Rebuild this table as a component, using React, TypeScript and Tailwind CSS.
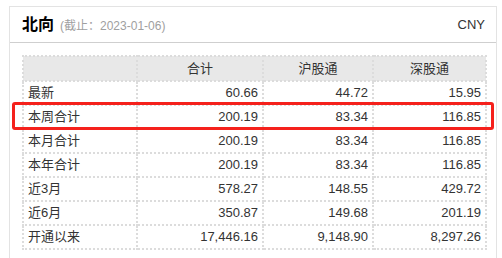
const rows: [string, string, string, string][] = [
  ["最新", "60.66", "44.72", "15.95"],
  ["本周合计", "200.19", "83.34", "116.85"],
  ["本月合计", "200.19", "83.34", "116.85"],
  ["本年合计", "200.19", "83.34", "116.85"],
  ["近3月", "578.27", "148.55", "429.72"],
  ["近6月", "350.87", "149.68", "201.19"],
  ["开通以来", "17,446.16", "9,148.90", "8,297.26"],
];

export default function App() {
  return (
    <div
      className="relative h-[258px] w-[502px] overflow-hidden bg-white text-[#333]"
      style={{ fontFamily: '"Liberation Sans", "Noto Sans CJK SC", sans-serif' }}
    >
      <div className="ml-[9px] mt-[6px] h-[260px] w-[488px] border border-[#e3e3e3]">
        <div className="flex h-[36px] items-center justify-between border-b border-[#cfcfcf] pl-[12px] pr-[11px]">
          <div className="flex items-baseline gap-[6px]">
            <span className="text-[16px] font-bold text-black">北向</span>
            <span className="text-[12px] text-[#a0a0a0]">(截止：2023-01-06)</span>
          </div>
          <span className="text-[13px] text-[#333]">CNY</span>
        </div>
        <div className="px-[12px] pt-[12px]">
          <table className="w-[463px] table-fixed border-collapse text-[13px]">
            <colgroup>
              <col className="w-[114px]" />
              <col className="w-[126px]" />
              <col className="w-[110px]" />
              <col className="w-[113px]" />
            </colgroup>
            <thead>
              <tr className="h-[25px] bg-[#e8e8e8]">
                <th className="border-2 border-dotted border-[#dcdcdc] font-normal"></th>
                <th className="border-2 border-dotted border-[#dcdcdc] font-normal">合计</th>
                <th className="border-2 border-dotted border-[#dcdcdc] font-normal">沪股通</th>
                <th className="border-2 border-dotted border-[#dcdcdc] font-normal">深股通</th>
              </tr>
            </thead>
            <tbody>
              {rows.map((r) => (
                <tr key={r[0]} className="h-[24px]">
                  <td className="border-2 border-dotted border-[#dcdcdc] pl-[4px] text-left">{r[0]}</td>
                  <td className="border-2 border-dotted border-[#dcdcdc] pr-[4px] text-right">{r[1]}</td>
                  <td className="border-2 border-dotted border-[#dcdcdc] pr-[4px] text-right">{r[2]}</td>
                  <td className="border-2 border-dotted border-[#dcdcdc] pr-[4px] text-right">{r[3]}</td>
                </tr>
              ))}
            </tbody>
          </table>
        </div>
      </div>
      <div className="absolute left-[12px] top-[102px] h-[28px] w-[482px] rounded-[3px] border-[3px] border-[#f5211c]" />
    </div>
  );
}
